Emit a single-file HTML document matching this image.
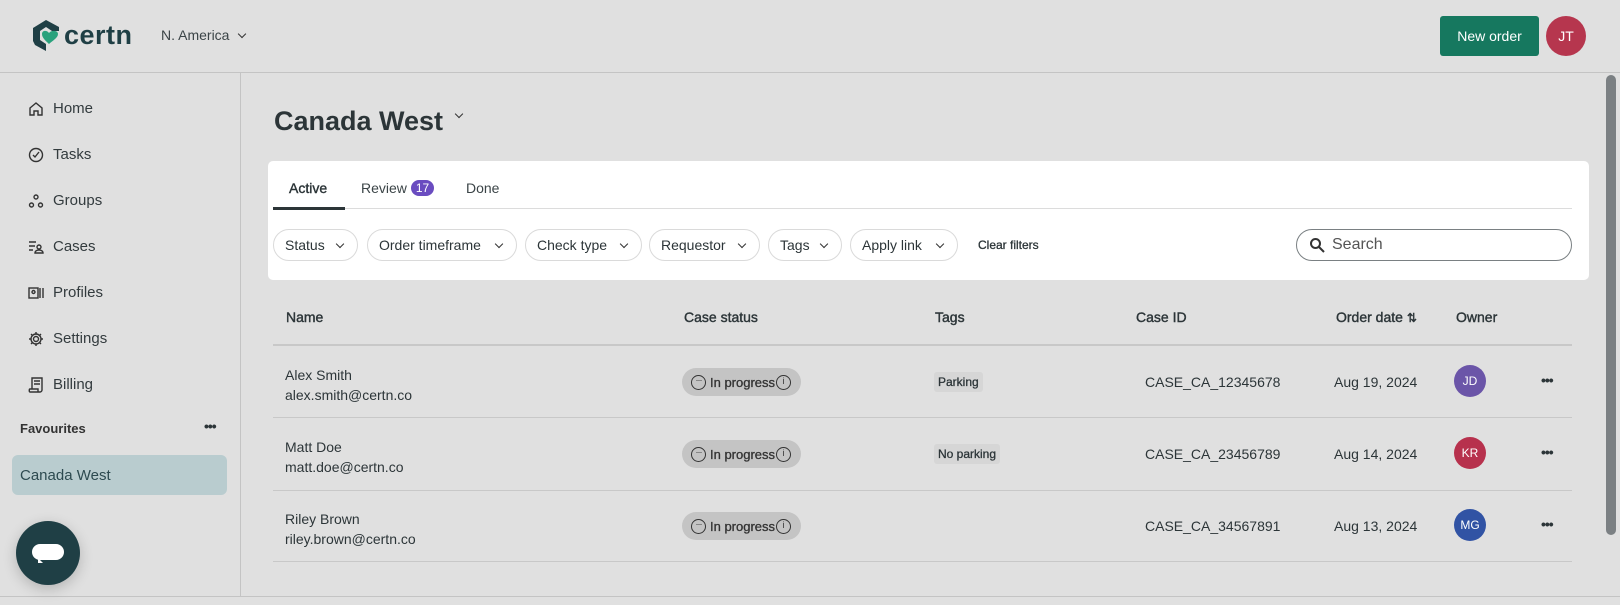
<!DOCTYPE html>
<html><head><meta charset="utf-8"><style>
*{box-sizing:border-box;margin:0;padding:0}
body{width:1620px;height:605px;background:#e0e0e0;font-family:"Liberation Sans",sans-serif;color:#2c3538;position:relative;overflow:hidden;font-size:14px}
.a{position:absolute;white-space:nowrap}
.nav{position:absolute;left:28px;font-size:15px;display:flex;align-items:center;gap:9px;color:#333b3e}
.nav svg{width:16px;height:16px}
.pill{position:absolute;top:229px;height:32px;border:1px solid #dadada;border-radius:16px;font-size:14px;display:flex;align-items:center;padding-left:11px;color:#2c3538}
.pill:after{content:"";position:absolute;right:14px;top:11px;width:5px;height:5px;border-right:1.5px solid #333;border-bottom:1.5px solid #333;transform:rotate(45deg)}
.hl{position:absolute;left:273px;width:1299px;height:1px;background:#c8c8c8}
.st{position:absolute;left:682px;width:119px;height:28px;border-radius:14px;background:#c4c4c4;font-size:13px;display:flex;align-items:center;padding-left:28px;color:#333;-webkit-text-stroke:0.3px #333}
.st:before{content:"···";position:absolute;left:9px;top:7px;width:13px;height:13px;border:1.4px solid #333;border-radius:50%;font-size:9px;line-height:8px;text-align:center;letter-spacing:-1px;-webkit-text-stroke:0}
.st:after{content:"i";position:absolute;right:10px;top:7px;width:13px;height:13px;border:1.4px solid #333;border-radius:50%;font-size:9px;line-height:11px;text-align:center;-webkit-text-stroke:0}
.av{position:absolute;left:1454px;width:32px;height:32px;border-radius:50%;color:#fff;font-size:12px;display:flex;align-items:center;justify-content:center}
.dots{position:absolute;left:1541px;font-weight:bold;font-size:14px;letter-spacing:-1px}
.th{position:absolute;top:309px;font-size:14px;-webkit-text-stroke:0.4px #2c3538;white-space:nowrap}
</style></head><body>
<svg class="a" style="left:32px;top:19px" width="34" height="33" viewBox="0 0 34 33"><path d="M14 1 L27 8 L27 12 L20 12 L14 8 L8 12 L8 21 L14 25 L14 32 L3 26 L1 22 L1 9 Z" fill="#1f3f45"/><path d="M10 15 C10 11 15 11 17 14 C19 11 26 11 26 15 C26 19 20 22 17 25 C14 22 10 19 10 15Z" fill="#2aa27d"/></svg>
<div class="a" style="left:64px;top:20px;font-size:27px;font-weight:bold;color:#1f3f45;letter-spacing:0.5px">certn</div>
<div class="a" style="left:161px;top:27px;font-size:14px;color:#3b4447">N. America <span style="display:inline-block;width:6px;height:6px;border-right:1.5px solid #333;border-bottom:1.5px solid #333;transform:rotate(45deg);margin:0 0 3px 6px"></span></div>
<div class="a" style="left:1440px;top:16px;width:99px;height:40px;background:#16785f;border-radius:3px;color:#fff;font-size:14px;display:flex;align-items:center;justify-content:center">New order</div>
<div class="a" style="left:1546px;top:16px;width:40px;height:40px;border-radius:50%;background:#b6364e;color:#fff;font-size:14px;display:flex;align-items:center;justify-content:center">JT</div>
<div class="a" style="left:0;top:72px;width:1620px;height:1px;background:#c4c4c4"></div>
<div class="a" style="left:240px;top:73px;width:1px;height:523px;background:#c4c4c4"></div>
<div class="a" style="left:0;top:596px;width:1620px;height:1px;background:#c4c4c4"></div>
<div class="a" style="left:1606px;top:75px;width:10px;height:460px;border-radius:5px;background:#7b8083"></div>
<div class="nav" style="top:100px"><svg viewBox="0 0 16 16" fill="none" stroke="#333" stroke-width="1.4"><path d="M2 7L8 2l6 5v7h-4v-4H6v4H2z"/></svg>Home</div>
<div class="nav" style="top:146px"><svg viewBox="0 0 16 16" fill="none" stroke="#333" stroke-width="1.4"><circle cx="8" cy="8" r="6.5"/><path d="M5 8l2 2 4-5"/></svg>Tasks</div>
<div class="nav" style="top:192px"><svg viewBox="0 0 16 16" fill="none" stroke="#333" stroke-width="1.4"><circle cx="8" cy="4" r="2"/><circle cx="3.5" cy="12" r="2"/><circle cx="12.5" cy="12" r="2"/></svg>Groups</div>
<div class="nav" style="top:238px"><svg viewBox="0 0 16 16" fill="none" stroke="#333" stroke-width="1.4"><path d="M1 3h7M1 7h6M1 11h4"/><circle cx="11" cy="8" r="2"/><path d="M7 14c0-2 2-3 4-3s4 1 4 3z"/></svg>Cases</div>
<div class="nav" style="top:284px"><svg viewBox="0 0 16 16" fill="none" stroke="#333" stroke-width="1.4"><rect x="1" y="3" width="9" height="10"/><circle cx="5.5" cy="7" r="1.5"/><path d="M12 3v10M15 3v10"/></svg>Profiles</div>
<div class="nav" style="top:330px"><svg viewBox="0 0 16 16" fill="none" stroke="#333" stroke-width="1.4"><circle cx="8" cy="8" r="2.5"/><path d="M8 1v2M8 13v2M1 8h2M13 8h2M3 3l1.5 1.5M11.5 11.5L13 13M3 13l1.5-1.5M11.5 4.5L13 3"/><circle cx="8" cy="8" r="5"/></svg>Settings</div>
<div class="nav" style="top:376px"><svg viewBox="0 0 16 16" fill="none" stroke="#333" stroke-width="1.4"><path d="M4 12V1h10v12c0 1-1 2-2 2H2c-1 0-1-3 0-3h8v3M6 4h6M6 7h6"/></svg>Billing</div>
<div class="a" style="left:20px;top:421px;font-size:13px;font-weight:bold;color:#333">Favourites</div>
<div class="a" style="left:204px;top:418px;font-weight:bold;font-size:14px;letter-spacing:-1px">•••</div>
<div class="a" style="left:12px;top:455px;width:215px;height:40px;border-radius:6px;background:#b9cccf;font-size:15px;color:#2d4a50;padding:12px 0 0 8px">Canada West</div>
<div class="a" style="left:16px;top:521px;width:64px;height:64px;border-radius:50%;background:#1f3f45;box-shadow:0 4px 14px rgba(0,0,0,.2)"><div style="position:absolute;left:16px;top:23px;width:32px;height:16px;border-radius:8px;background:#fff"></div><div style="position:absolute;left:22px;top:37px;width:0;height:0;border-left:5px solid #fff;border-top:5px solid transparent"></div></div>
<div class="a" style="left:274px;top:106px;font-size:27px;font-weight:bold;color:#2c3538">Canada West</div>
<div class="a" style="left:456px;top:111px;width:6px;height:6px;border-right:1.5px solid #333;border-bottom:1.5px solid #333;transform:rotate(45deg)"></div>
<div class="a" style="left:268px;top:161px;width:1321px;height:119px;background:#fff;border-radius:5px"></div>
<div class="a" style="left:289px;top:180px;font-size:14px;-webkit-text-stroke:0.4px #2c3538;color:#2c3538">Active</div>
<div class="a" style="left:361px;top:180px;font-size:14px;color:#3b4447">Review</div>
<div class="a" style="left:411px;top:180px;width:23px;height:16px;border-radius:8px;background:#6a4cc0;color:#fff;font-size:12px;text-align:center;line-height:16px">17</div>
<div class="a" style="left:466px;top:180px;font-size:14px;color:#3b4447">Done</div>
<div class="a" style="left:273px;top:208px;width:1299px;height:1px;background:#dcdcdc"></div>
<div class="a" style="left:273px;top:207px;width:72px;height:3px;background:#2c3538"></div>
<div class="pill" style="left:273px;width:85px">Status</div>
<div class="pill" style="left:367px;width:150px">Order timeframe</div>
<div class="pill" style="left:525px;width:117px">Check type</div>
<div class="pill" style="left:649px;width:111px">Requestor</div>
<div class="pill" style="left:768px;width:74px">Tags</div>
<div class="pill" style="left:850px;width:108px">Apply link</div>
<div class="a" style="left:978px;top:238px;font-size:12px;-webkit-text-stroke:0.3px #2c3538">Clear filters</div>
<div class="a" style="left:1296px;top:229px;width:276px;height:32px;border:1px solid #7a8083;border-radius:16px"></div>
<svg class="a" style="left:1309px;top:237px" width="16" height="16" viewBox="0 0 16 16" fill="none" stroke="#333" stroke-width="2"><circle cx="6.5" cy="6.5" r="4.5"/><path d="M10 10l5 5"/></svg>
<div class="a" style="left:1332px;top:236px;font-size:16px;color:#555">Search</div>
<div class="th" style="left:286px">Name</div>
<div class="th" style="left:684px">Case status</div>
<div class="th" style="left:935px">Tags</div>
<div class="th" style="left:1136px">Case ID</div>
<div class="th" style="left:1336px">Order date <span style="font-size:12px">⇅</span></div>
<div class="th" style="left:1456px">Owner</div>
<div class="hl" style="top:344px;height:2px"></div>
<div class="hl" style="top:417px"></div><div class="hl" style="top:490px"></div><div class="hl" style="top:561px"></div>
<div class="a" style="left:285px;top:365px;line-height:20px">Alex Smith<br>alex.smith@certn.co</div>
<div class="a" style="left:285px;top:437px;line-height:20px">Matt Doe<br>matt.doe@certn.co</div>
<div class="a" style="left:285px;top:509px;line-height:20px">Riley Brown<br>riley.brown@certn.co</div>
<div class="st" style="top:368px">In progress</div>
<div class="st" style="top:440px">In progress</div>
<div class="st" style="top:512px">In progress</div>
<div class="a" style="left:934px;top:372px;height:20px;padding:0 4px;background:#d6d6d6;border-radius:3px;font-size:12px;line-height:20px;-webkit-text-stroke:0.3px #2c3538">Parking</div>
<div class="a" style="left:934px;top:444px;height:20px;padding:0 4px;background:#d6d6d6;border-radius:3px;font-size:12px;line-height:20px;-webkit-text-stroke:0.3px #2c3538">No parking</div>
<div class="a" style="left:1145px;top:374px">CASE_CA_12345678</div>
<div class="a" style="left:1145px;top:446px">CASE_CA_23456789</div>
<div class="a" style="left:1145px;top:518px">CASE_CA_34567891</div>
<div class="a" style="left:1334px;top:374px">Aug 19, 2024</div>
<div class="a" style="left:1334px;top:446px">Aug 14, 2024</div>
<div class="a" style="left:1334px;top:518px">Aug 13, 2024</div>
<div class="av" style="top:365px;background:#6b55a8">JD</div>
<div class="av" style="top:437px;background:#b7314d">KR</div>
<div class="av" style="top:509px;background:#3153a4">MG</div>
<div class="dots" style="top:372px">•••</div>
<div class="dots" style="top:444px">•••</div>
<div class="dots" style="top:516px">•••</div>
</body></html>
